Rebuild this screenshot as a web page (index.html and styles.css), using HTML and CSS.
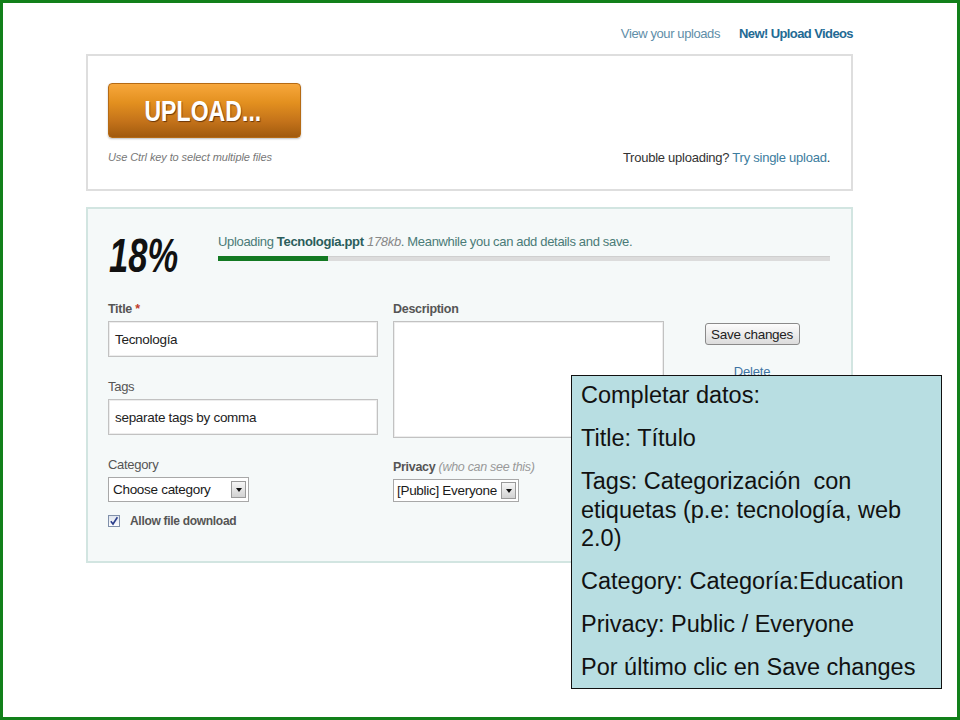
FILE: index.html
```html
<!DOCTYPE html>
<html lang="es">
<head>
<meta charset="utf-8">
<title>Upload</title>
<link rel="stylesheet" href="styles.css">
</head>
<body>
<div class="slide">
  <div class="page">
    <div class="toplinks">
      <a class="lnk-light">View your uploads</a>
      <a class="lnk-bold">New! Upload Videos</a>
    </div>

    <div class="upload-box">
      <div class="upload-btn"><span class="upload-txt">UPLOAD...</span></div>
      <div class="upload-foot">
        <span class="hint">Use Ctrl key to select multiple files</span>
        <span class="trouble">Trouble uploading? <a class="lnk">Try single upload</a>.</span>
      </div>
    </div>

    <div class="details">
      <div class="head">
        <div class="pct"><span class="pct-txt">18%</span></div>
        <div class="prog">
          <div class="prog-text">Uploading <b>Tecnología.ppt</b> <i>178kb</i>. Meanwhile you can add details and save.</div>
          <div class="bar"><div class="fill" style="width:18%"></div></div>
        </div>
      </div>

      <div class="form">
        <div class="col1">
          <div class="group">
            <div class="lbl">Title <span class="req">*</span></div>
            <div class="field">Tecnología</div>
          </div>
          <div class="group">
            <div class="lbl lbl-reg">Tags</div>
            <div class="field">separate tags by comma</div>
          </div>
          <div class="group">
            <div class="lbl lbl-reg">Category</div>
            <div class="select sel-cat"><span>Choose category</span><span class="arrow"><span class="tri"></span></span></div>
          </div>
          <div class="check">
            <span class="cbox"><svg width="10" height="10" viewBox="0 0 10 10"><path d="M1.8 5.2 L4 8 L8.4 1.2" fill="none" stroke="#2b3f8c" stroke-width="1.6"/></svg></span>
            <span class="check-text">Allow file download</span>
          </div>
        </div>

        <div class="col2">
          <div class="group">
            <div class="lbl">Description</div>
            <div class="textarea"></div>
          </div>
          <div class="group group-priv">
            <div class="lbl">Privacy <span class="muted">(who can see this)</span></div>
            <div class="select sel-priv"><span>[Public] Everyone</span><span class="arrow"><span class="tri"></span></span></div>
          </div>
        </div>

        <div class="col3">
          <button class="save">Save changes</button>
          <a class="delete">Delete</a>
        </div>
      </div>
    </div>
  </div>

  <div class="note">
    <p>Completar datos:</p>
    <p>Title: Título</p>
    <p>Tags: Categorización&nbsp; con etiquetas (p.e: tecnología, web 2.0)</p>
    <p>Category: Categoría:Education</p>
    <p>Privacy: Public / Everyone</p>
    <p>Por último clic en Save changes</p>
  </div>
</div>
</body>
</html>
```

FILE: styles.css
```css
html, body {
  margin: 0;
  padding: 0;
  background: #fff;
}

.slide {
  position: relative;
  width: 960px;
  height: 720px;
  box-sizing: border-box;
  border: 3px solid #12801a;
  padding: 22px 0 0 83px;
  background: #fff;
  overflow: hidden;
  font-family: "Liberation Sans", Arial, sans-serif;
}

.page {
  width: 767px;
}

/* top links */
.toplinks {
  display: flex;
  justify-content: flex-end;
  gap: 19px;
  height: 18px;
  line-height: 18px;
  font-size: 13px;
  letter-spacing: -0.4px;
  margin-bottom: 11px;
}
.lnk-light {
  color: #5f8ea8;
}
.lnk-bold {
  color: #236a94;
  font-weight: bold;
  letter-spacing: -0.6px;
}

/* upload box */
.upload-box {
  border: 2px solid #dedede;
  padding: 27px 21px 22px 20px;
}
.upload-btn {
  width: 193px;
  height: 55px;
  box-sizing: border-box;
  border-radius: 4px;
  border: 1px solid #b56a14;
  background: linear-gradient(#f7a73c 0%, #e3901f 35%, #c4731a 70%, #a15a0e 100%);
  box-shadow: 0 1px 2px rgba(0, 0, 0, 0.25);
  display: flex;
  align-items: center;
  justify-content: center;
}
.upload-txt {
  display: inline-block;
  color: #fff;
  font-weight: bold;
  font-size: 30px;
  line-height: 32px;
  transform: scaleX(0.77);
  text-shadow: 1px 1px 1px rgba(70, 30, 0, 0.7);
  margin-left: -3px;
}
.upload-foot {
  display: flex;
  justify-content: space-between;
  align-items: flex-start;
  margin-top: 11px;
  height: 18px;
}
.hint {
  font-style: italic;
  font-size: 11px;
  line-height: 14px;
  letter-spacing: -0.1px;
  color: #777;
  margin-top: 1px;
}
.trouble {
  font-size: 13px;
  line-height: 18px;
  letter-spacing: -0.25px;
  color: #333;
}
.lnk {
  color: #3c7c9e;
}

/* details box */
.details {
  margin-top: 16px;
  border: 2px solid #d2e5e1;
  background: #f5f9f9;
  padding: 24px 21px 32px 20px;
}
.head {
  display: flex;
  height: 46px;
}
.pct {
  width: 110px;
  height: 46px;
}
.pct-txt {
  display: inline-block;
  font-size: 48px;
  line-height: 46px;
  font-weight: bold;
  font-style: italic;
  color: #111;
  transform: scaleX(0.72);
  transform-origin: 0 50%;
  margin-left: 1px;
}
.prog {
  width: 612px;
}
.prog-text {
  font-size: 13px;
  line-height: 18px;
  letter-spacing: -0.33px;
  color: #4a7b77;
  white-space: nowrap;
}
.prog-text b {
  color: #2b5d5b;
}
.prog-text i {
  color: #888;
}
.bar {
  margin-top: 5px;
  height: 5px;
  background: #dcdcdc;
  border-top: 1px solid #cfcfcf;
  box-sizing: border-box;
}
.fill {
  height: 5px;
  margin-top: -1px;
  background: #137a23;
}

.form {
  display: flex;
  margin-top: 22px;
}
.col1 {
  width: 270px;
}
.col2 {
  width: 271px;
  margin-left: 15px;
}
.col3 {
  width: 96px;
  margin-left: 40px;
  padding-top: 22px;
  display: flex;
  flex-direction: column;
  align-items: center;
}
.group + .group {
  margin-top: 22px;
}
.col2 .group-priv {
  margin-top: 21px;
}
.lbl {
  font-size: 12.5px;
  line-height: 16px;
  letter-spacing: -0.3px;
  font-weight: bold;
  color: #555;
  margin-bottom: 4px;
  white-space: nowrap;
}
.lbl-reg {
  font-weight: normal;
  font-size: 13px;
}
.req {
  color: #c0392b;
}
.muted {
  font-weight: normal;
  font-style: italic;
  color: #999;
}
.field {
  height: 36px;
  box-sizing: border-box;
  border: 1px solid #c2c2c2;
  box-shadow: inset 0 0 0 1px #ededed;
  background: #fff;
  font-size: 13.5px;
  letter-spacing: -0.3px;
  color: #222;
  padding: 0 6px;
  display: flex;
  align-items: center;
}
.textarea {
  height: 117px;
  box-sizing: border-box;
  border: 1px solid #c2c2c2;
  box-shadow: inset 0 0 0 1px #ededed;
  background: #fff;
}
.select {
  display: flex;
  align-items: center;
  justify-content: space-between;
  box-sizing: border-box;
  border: 1px solid #a8a8a8;
  background: #fff;
  font-size: 13.5px;
  letter-spacing: -0.3px;
  color: #1a1a1a;
  padding-left: 4px;
  white-space: nowrap;
}
.sel-cat {
  width: 141px;
  height: 25px;
}
.sel-priv {
  width: 126px;
  height: 23px;
  padding-left: 3px;
}
.arrow {
  width: 15px;
  height: 17px;
  box-sizing: border-box;
  margin-right: 2px;
  border: 1px solid #9a9a9a;
  background: linear-gradient(#f6f6f6, #d2d2d2);
  display: flex;
  align-items: center;
  justify-content: center;
}
.sel-priv .arrow {
  height: 17px;
}
.tri {
  width: 0;
  height: 0;
  border-left: 3.5px solid transparent;
  border-right: 3.5px solid transparent;
  border-top: 4px solid #111;
}
.check {
  display: flex;
  align-items: center;
  gap: 10px;
  margin-top: 11px;
  height: 16px;
}
.cbox {
  width: 12px;
  height: 12px;
  box-sizing: border-box;
  border: 1px solid #8090aa;
  background: linear-gradient(#dfe5ee, #fdfdff);
  display: flex;
  align-items: center;
  justify-content: center;
}
.check-text {
  font-size: 12px;
  line-height: 16px;
  letter-spacing: -0.3px;
  font-weight: bold;
  color: #555;
}

.save {
  width: 95px;
  height: 22px;
  padding: 0;
  border: 1px solid #8a8a8a;
  border-radius: 3px;
  background: linear-gradient(#fcfcfc, #dcdcdc);
  font-family: inherit;
  font-size: 13.5px;
  letter-spacing: -0.3px;
  color: #222;
  white-space: nowrap;
}
.delete {
  margin-top: 18px;
  font-size: 13px;
  line-height: 18px;
  letter-spacing: -0.2px;
  color: #3d73a3;
}

/* overlay note */
.note {
  position: absolute;
  left: 568px;
  top: 372px;
  width: 371px;
  height: 314px;
  box-sizing: border-box;
  border: 1px solid #111;
  background: #b8dee2;
  padding: 5px 9px 0 9px;
  font-family: "Liberation Sans", Arial, sans-serif;
  font-size: 23.5px;
  line-height: 28.5px;
  color: #111;
}
.note p {
  margin: 0 0 14.5px 0;
}
```
